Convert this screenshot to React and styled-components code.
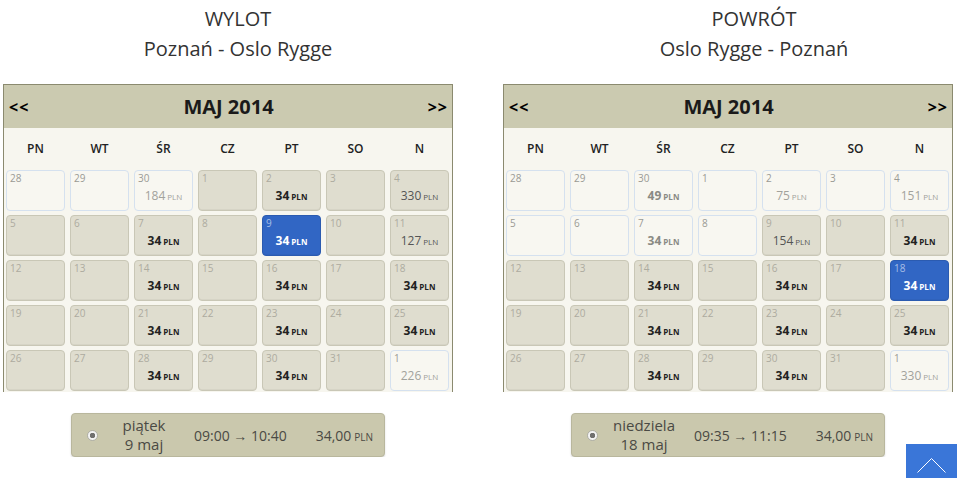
import React from 'react'
import styled, { createGlobalStyle } from 'styled-components'

const GlobalStyle = createGlobalStyle`
  html, body {
    margin: 0;
    padding: 0;
    background: #fff;
    font-family: "Open Sans", "Liberation Sans", sans-serif;
    color: #333;
  }
`

const Page = styled.div`
  display: flex;
  gap: 30px;
  padding-left: 3px;
`

const Column = styled.section`
  width: ${({ $width }) => $width}px;
  flex-shrink: 0;
  display: flex;
  flex-direction: column;
`

const Heading = styled.div`
  padding-top: 4px;
  padding-left: ${({ $shift }) => $shift || 0}px;
  text-align: center;
  font-size: 20px;
  line-height: 30px;
  color: #333;
  margin-bottom: 20px;
`

const Block = styled.div`
  width: 450px;
  display: flex;
  flex-direction: column;
  align-items: center;
`

const Calendar = styled.div`
  width: 448px;
  height: 307px;
  border: 1px solid #8b8a6f;
  border-bottom: none;
  background: #f7f6ef;
  overflow: hidden;
`

const Header = styled.div`
  height: 43px;
  background: #cbcab0;
  display: flex;
  align-items: center;
  justify-content: space-between;
  padding: 0 4px 0 5px;
`

const Nav = styled.span`
  font-size: 16px;
  font-weight: 700;
  color: #000;
  letter-spacing: 1px;
  width: 30px;
  text-align: ${({ $right }) => ($right ? 'right' : 'left')};
`

const Month = styled.span`
  font-size: 20px;
  font-weight: 700;
  color: #1a1a1a;
`

const Grid = styled.div`
  display: grid;
  grid-template-columns: repeat(7, 59px);
  column-gap: 5px;
  padding: 0 3px 0 2px;
`

const WeekRow = styled(Grid)`
  height: 40px;
  align-items: center;
  margin-bottom: 2px;
`

const WeekDay = styled.div`
  text-align: center;
  font-size: 12px;
  font-weight: 600;
  color: #222;
`

const Days = styled(Grid)`
  grid-auto-rows: 41px;
  row-gap: 4px;
`

const cellTheme = {
  dark: { bg: '#dfddcf', border: '#c9c7b6', num: '#adab9f', bold: '#222', light: '#555' },
  light: { bg: '#f8f7f1', border: '#d5e1ef', num: '#9a9a94', bold: '#8a8a84', light: '#a2a29c' },
  selected: { bg: '#3166c4', border: '#2b5bb0', num: '#a8bfe6', bold: '#fff', light: '#fff' },
}

const Cell = styled.div`
  box-sizing: border-box;
  border: 1px solid ${({ $kind }) => cellTheme[$kind].border};
  background: ${({ $kind }) => cellTheme[$kind].bg};
  border-radius: 4px;
  display: flex;
  flex-direction: column;
  box-shadow: ${({ $kind }) => ($kind === 'light' ? 'none' : 'inset 0 -1px 0 rgba(0,0,0,0.04)')};
`

const DayNum = styled.div`
  font-size: 10px;
  line-height: 12px;
  padding: 1px 0 0 3px;
  color: ${({ $kind }) => cellTheme[$kind].num};
`

const Price = styled.div`
  margin-top: 4px;
  text-align: center;
  font-size: 12px;
  line-height: 16px;
  font-weight: ${({ $bold }) => ($bold ? 700 : 400)};
  color: ${({ $kind, $bold }) => ($bold ? cellTheme[$kind].bold : cellTheme[$kind].light)};
  small {
    font-size: 8px;
    margin-left: 2px;
  }
`

const Summary = styled.div`
  box-sizing: border-box;
  width: 314px;
  height: 44px;
  margin-top: 21px;
  background: #cac8ad;
  border: 1px solid #b9b79d;
  border-radius: 4px;
  box-shadow: 0 1px 2px rgba(0, 0, 0, 0.15);
  display: flex;
  align-items: center;
  padding-left: 15px;
  color: #4a4a44;
  font-size: 14px;
`

const Radio = styled.span`
  width: 11px;
  height: 11px;
  border-radius: 50%;
  background: radial-gradient(circle, #707070 0 2.5px, #f4f4f4 3px);
  border: 1px solid #b0b0a8;
  box-sizing: border-box;
`

const DateCol = styled.div`
  width: 72px;
  margin-left: 10px;
  text-align: center;
  font-size: 15px;
  line-height: 19px;
`

const Times = styled.div`
  margin-left: 14px;
`

const Total = styled.div`
  margin-left: 29px;
  small {
    font-size: 10px;
    margin-left: 3px;
  }
`

const TopButton = styled.button`
  position: fixed;
  right: 0;
  top: 444px;
  width: 51px;
  height: 40px;
  border: none;
  padding: 0;
  background: #3a76d8;
  svg {
    position: absolute;
    left: 0;
    top: 0;
  }
`

const WEEK = ['PN', 'WT', 'ŚR', 'CZ', 'PT', 'SO', 'N']

const buildDays = (prices, selected, lightUntil) => {
  const list = [
    { n: 28, out: true },
    { n: 29, out: true },
    { n: 30, out: true },
  ]
  for (let d = 1; d <= 31; d++) list.push({ n: d })
  list.push({ n: 1, out: true, next: true })
  return list.map((d, i) => {
    const key = d.next ? 'n1' : d.out ? `p${d.n}` : d.n
    let kind = 'dark'
    if (d.out || i < lightUntil) kind = 'light'
    if (!d.out && d.n === selected) kind = 'selected'
    return { ...d, key, kind, price: prices[key] }
  })
}

const outbound = buildDays(
  { p30: [184], 2: [34, 1], 4: [330], 7: [34, 1], 9: [34, 1], 11: [127], 14: [34, 1], 16: [34, 1], 18: [34, 1], 21: [34, 1], 23: [34, 1], 25: [34, 1], 28: [34, 1], 30: [34, 1], n1: [226] },
  9,
  3
)

const inbound = buildDays(
  { p30: [49, 1], 2: [75], 4: [151], 7: [34, 1], 9: [154], 11: [34, 1], 14: [34, 1], 16: [34, 1], 18: [34, 1], 21: [34, 1], 23: [34, 1], 25: [34, 1], 28: [34, 1], 30: [34, 1], n1: [330] },
  18,
  11
)

const Month2014 = ({ days }) => (
  <Calendar>
    <Header>
      <Nav>&lt;&lt;</Nav>
      <Month>MAJ 2014</Month>
      <Nav $right>&gt;&gt;</Nav>
    </Header>
    <WeekRow>
      {WEEK.map(w => <WeekDay key={w}>{w}</WeekDay>)}
    </WeekRow>
    <Days>
      {days.map(d => (
        <Cell key={d.key} $kind={d.kind}>
          <DayNum $kind={d.kind}>{d.n}</DayNum>
          {d.price && (
            <Price $kind={d.kind} $bold={d.price[1]}>
              {d.price[0]}<small>PLN</small>
            </Price>
          )}
        </Cell>
      ))}
    </Days>
  </Calendar>
)

const Leg = ({ width, shift, title, route, days, day, date, times }) => (
  <Column $width={width}>
    <Heading $shift={shift}>
      <div>{title}</div>
      <div>{route}</div>
    </Heading>
    <Block>
      <Month2014 days={days} />
      <Summary>
        <Radio />
        <DateCol>
          <div>{day}</div>
          <div>{date}</div>
        </DateCol>
        <Times>{times}</Times>
        <Total>34,00<small>PLN</small></Total>
      </Summary>
    </Block>
  </Column>
)

export default function App() {
  return (
    <>
      <GlobalStyle />
      <Page>
        <Leg width={470} title="WYLOT" route="Poznań - Oslo Rygge" days={outbound} day="piątek" date="9 maj" times="09:00 → 10:40" />
        <Leg width={454} shift={48} title="POWRÓT" route="Oslo Rygge - Poznań" days={inbound} day="niedziela" date="18 maj" times="09:35 → 11:15" />
      </Page>
      <TopButton aria-label="top">
        <svg width="51" height="40" viewBox="0 0 51 40">
          <polyline points="11.5,28.5 25.5,14.5 39.5,28.5" fill="none" stroke="#fff" strokeWidth="1" />
        </svg>
      </TopButton>
    </>
  )
}
